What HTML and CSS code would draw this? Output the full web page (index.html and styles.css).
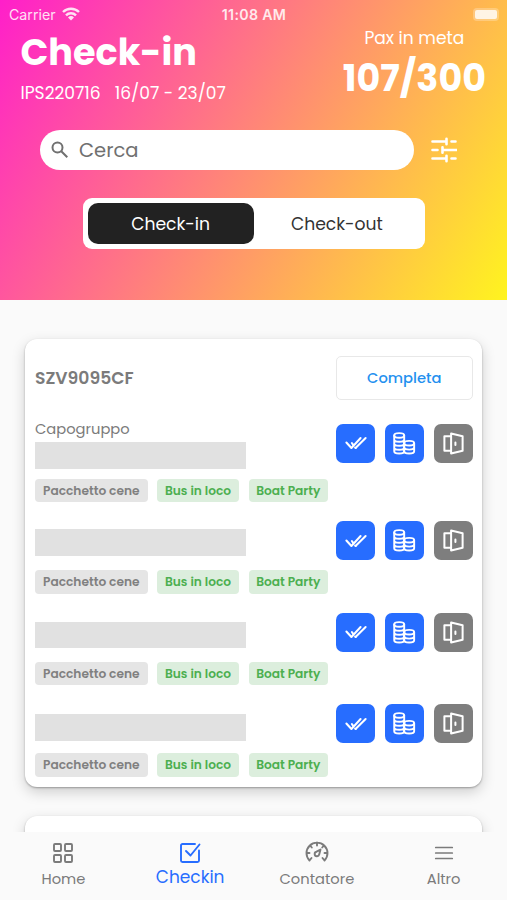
FILE: index.html
```html
<!DOCTYPE html>
<html lang="it">
<head>
    <meta charset="UTF-8">
    <meta name="viewport" content="width=device-width, initial-scale=1.0">
    <title>Check-in</title>
    <link rel="stylesheet" href="styles.css">
</head>
<body>

    <!-- Icone condivise -->
    <svg class="sprite" width="0" height="0">
        <symbol id="icon-checks" viewBox="0 0 24 24">
            <path d="M1.500 11.500l5.500 6L17 6.500M11.500 17.500L22.500 6.500M7.500 12l1 1.500M11 17l1 .5"/>
        </symbol>
        <symbol id="icon-coins" viewBox="0 0 24 24">
            <ellipse cx="7" cy="3.600" rx="5.200" ry="2.400"/>
            <path d="M1.800 3.600v16.500c0 1.300 2.300 2.400 5.200 2.400s5.200-1.100 5.200-2.400v-16.500M1.800 7.800c0 1.300 2.300 2.400 5.200 2.400s5.200-1.100 5.200-2.400M1.800 12c0 1.300 2.300 2.400 5.200 2.400s5.200-1.100 5.200-2.400M1.800 16.200c0 1.300 2.300 2.400 5.200 2.400s5.200-1.100 5.200-2.400"/>
            <ellipse cx="17.400" cy="11.700" rx="5.200" ry="2.400"/>
            <path d="M22.600 11.700v8.400c0 1.300-2.300 2.400-5.200 2.400s-5.200-1.100-5.200-2.400v-8.400M12.200 16c0 1.300 2.300 2.400 5.200 2.400s5.200-1.100 5.200-2.400"/>
        </symbol>
        <symbol id="icon-door" viewBox="0 0 24 24">
            <path d="M9.500 1.500L21.500 4.500v15L9.500 22.500zM9.500 4.500h-7v15h7M14 11v2.500"/>
        </symbol>
    </svg>

    <!-- Intestazione -->
    <header class="header">
        <div class="status-bar">
            <div class="carrier">
                <span>Carrier</span>
                <svg class="wifi" viewBox="0 0 18 14">
                    <path d="M1 5a11.500 11.500 0 0 1 16 0M4 8.300a7 7 0 0 1 10 0"/>
                    <path class="wifi-dot" d="M9 13.500L6 10.400a4.300 4.300 0 0 1 6 0z"/>
                </svg>
            </div>
            <span class="time">11:08 AM</span>
            <div class="battery"><span class="battery-level"></span></div>
        </div>

        <div class="heading">
            <div>
                <h1>Check-in</h1>
                <p class="trip"><span class="trip-code">IPS220716</span><span class="trip-dates">16/07 - 23/07</span></p>
            </div>
            <div class="pax">
                <p class="pax-label">Pax in meta</p>
                <p class="pax-count">107/300</p>
            </div>
        </div>

        <div class="search-row">
            <div class="search">
                <svg class="search-icon" viewBox="0 0 18 18">
                    <circle cx="6.500" cy="6.500" r="5"/>
                    <path d="M10.300 10.300l6 6"/>
                </svg>
                <span>Cerca</span>
            </div>
            <svg class="filter-icon" viewBox="0 0 26 26">
                <path d="M1.500 4.500h14M20.500 4.500h4M15.500 1.800v5.400M1.500 13h5M11.500 13h14M11.500 10.300v5.400M1.500 21.500h14M20.500 21.500h4M15.500 18.800v5.400"/>
            </svg>
        </div>

        <div class="switch">
            <button class="switch-option active">Check-in</button>
            <button class="switch-option">Check-out</button>
        </div>
    </header>

    <!-- Elenco gruppi -->
    <main class="content">
        <section class="card">
            <div class="card-header">
                <h2>SZV9095CF</h2>
                <button class="complete">Completa</button>
            </div>

            <div class="person leader">
                <div class="info">
                    <p class="role">Capogruppo</p>
                    <div class="name"></div>
                </div>
                <div class="actions">
                    <button class="action"><svg class="checks"><use href="#icon-checks"/></svg></button>
                    <button class="action"><svg class="coins"><use href="#icon-coins"/></svg></button>
                    <button class="action off"><svg class="door"><use href="#icon-door"/></svg></button>
                </div>
                <div class="tags">
                    <span class="tag tag-dinner">Pacchetto cene</span>
                    <span class="tag tag-bus">Bus in loco</span>
                    <span class="tag tag-boat">Boat Party</span>
                </div>
            </div>

            <div class="person">
                <div class="info"><div class="name"></div></div>
                <div class="actions">
                    <button class="action"><svg class="checks"><use href="#icon-checks"/></svg></button>
                    <button class="action"><svg class="coins"><use href="#icon-coins"/></svg></button>
                    <button class="action off"><svg class="door"><use href="#icon-door"/></svg></button>
                </div>
                <div class="tags">
                    <span class="tag tag-dinner">Pacchetto cene</span>
                    <span class="tag tag-bus">Bus in loco</span>
                    <span class="tag tag-boat">Boat Party</span>
                </div>
            </div>

            <div class="person">
                <div class="info info-low"><div class="name"></div></div>
                <div class="actions">
                    <button class="action"><svg class="checks"><use href="#icon-checks"/></svg></button>
                    <button class="action"><svg class="coins"><use href="#icon-coins"/></svg></button>
                    <button class="action off"><svg class="door"><use href="#icon-door"/></svg></button>
                </div>
                <div class="tags">
                    <span class="tag tag-dinner">Pacchetto cene</span>
                    <span class="tag tag-bus">Bus in loco</span>
                    <span class="tag tag-boat">Boat Party</span>
                </div>
            </div>

            <div class="person">
                <div class="info info-lower"><div class="name"></div></div>
                <div class="actions">
                    <button class="action"><svg class="checks"><use href="#icon-checks"/></svg></button>
                    <button class="action"><svg class="coins"><use href="#icon-coins"/></svg></button>
                    <button class="action off"><svg class="door"><use href="#icon-door"/></svg></button>
                </div>
                <div class="tags">
                    <span class="tag tag-dinner">Pacchetto cene</span>
                    <span class="tag tag-bus">Bus in loco</span>
                    <span class="tag tag-boat">Boat Party</span>
                </div>
            </div>
        </section>

        <section class="card card-next"></section>
    </main>

    <!-- Navigazione -->
    <nav class="tab-bar">
        <a class="tab">
            <svg viewBox="0 0 24 24">
                <rect x="3" y="3" width="7" height="7" rx="1"/>
                <rect x="14" y="3" width="7" height="7" rx="1"/>
                <rect x="3" y="14" width="7" height="7" rx="1"/>
                <rect x="14" y="14" width="7" height="7" rx="1"/>
            </svg>
            <span>Home</span>
        </a>
        <a class="tab selected">
            <svg viewBox="0 0 24 24">
                <path d="M17 3H4.500A1.500 1.500 0 0 0 3 4.500v15A1.500 1.500 0 0 0 4.500 21h15a1.500 1.500 0 0 0 1.500-1.500V9.500M8 10l4.500 4.500L21.500 3.500"/>
            </svg>
            <span>Checkin</span>
        </a>
        <a class="tab">
            <svg viewBox="0 0 24 24">
                <path d="M4.500 19.500a10.500 10.500 0 1 1 15 0l-2-2.500M4.500 19.500l2-2.500M12 1.500v3M5.500 5l1.300 1.500M18.500 5l-1.300 1.500M1.500 12H4.500M19.500 12h3"/>
                <path d="M15.500 8.500l-1.300 5a2.300 2.300 0 1 1-2.700-2.800z"/>
            </svg>
            <span>Contatore</span>
        </a>
        <a class="tab">
            <svg class="menu" viewBox="0 0 24 24"><path d="M3 6h18M3 12h18M3 18h18"/></svg>
            <span>Altro</span>
        </a>
    </nav>

</body>
</html>
```
FILE: styles.css
```css
* {
    box-sizing: border-box;
}

body {
    font-family: Poppins, Inter, "Open Sans", sans-serif;
    margin: 0;
    height: 900px;
    display: flex;
    flex-direction: column;
    overflow: hidden;
    background-color: #fafafa;
    color: #7b7b7b;
}

h1, h2, p {
    margin: 0;
}

button {
    font: inherit;
    border: none;
    padding: 0;
    cursor: pointer;
}

svg {
    fill: none;
    stroke: currentColor;
    stroke-linecap: round;
    stroke-linejoin: round;
}

.sprite {
    position: absolute;
}

/* Intestazione */
.header {
    height: 300px;
    flex-shrink: 0;
    color: white;
    background: linear-gradient(120.6deg, #ff1fca, #fff41f);
}

.status-bar {
    height: 28px;
    padding: 0 8px 0 9px;
    display: grid;
    grid-template-columns: 1fr auto 1fr;
    align-items: center;
    font-family: Inter, sans-serif;
    font-size: 14.2px;
    opacity: 0.85;
}

.carrier {
    display: flex;
    align-items: center;
    gap: 6px;
}

.wifi {
    width: 18px;
    height: 14px;
    stroke-width: 2.4;
    stroke-linecap: butt;
}

.wifi-dot {
    fill: currentColor;
    stroke: none;
}

.time {
    font-weight: 600;
    letter-spacing: 0.3px;
}

.battery {
    justify-self: end;
    width: 26px;
    height: 13px;
    padding: 2px;
    border-radius: 4px;
    background-color: rgba(255, 255, 255, 0.3);
}

.battery-level {
    display: block;
    height: 9px;
    border-radius: 2px;
    background-color: white;
}

.heading {
    height: 102px;
    padding: 0 21px 0 20.5px;
    display: flex;
    justify-content: space-between;
}

h1 {
    margin-top: 3px;
    font-size: 36.6px;
    line-height: 44px;
    font-weight: 700;
}

.trip {
    margin-top: 6px;
    font-size: 17.1px;
    line-height: 24px;
    display: flex;
    gap: 14px;
}

.pax {
    text-align: center;
}

.pax-label {
    font-size: 17.1px;
    line-height: 20px;
}

.pax-count {
    margin-top: 9px;
    font-size: 36.5px;
    line-height: 44px;
    font-weight: 700;
}

.search-row {
    padding: 0 50px 0 40px;
    display: flex;
    align-items: center;
    justify-content: space-between;
}

.search {
    width: 374px;
    height: 40px;
    padding-left: 11px;
    display: flex;
    align-items: center;
    gap: 10px;
    border-radius: 20px;
    background-color: white;
    color: #707070;
    font-size: 19.5px;
}

.search-icon {
    width: 18px;
    height: 18px;
    stroke-width: 2;
    stroke-linecap: butt;
}

.filter-icon {
    width: 26px;
    height: 26px;
    stroke-width: 2.6;
}

.switch {
    width: 342.5px;
    height: 51px;
    margin: 28px 0 0 82.5px;
    padding: 5px;
    display: flex;
    border-radius: 9px;
    background-color: white;
}

.switch-option {
    flex: 1;
    border-radius: 10px;
    background: none;
    color: #333;
    font-size: 17.2px;
}

.switch-option.active {
    background-color: #222;
    color: white;
}

/* Elenco gruppi */
.content {
    flex: 1;
    min-height: 0;
    padding: 39px 25px 0;
    overflow: hidden;
}

.card {
    height: 447.5px;
    padding: 17px 9px 0 10px;
    border-radius: 12px;
    background-color: white;
    box-shadow: 0 1px 2px rgba(0, 0, 0, 0.3), 0 5px 14px rgba(0, 0, 0, 0.18);
}

.card-next {
    margin-top: 29.5px;
}

.card-header {
    height: 44px;
    display: flex;
    align-items: center;
    justify-content: space-between;
}

h2 {
    font-size: 17.2px;
    font-weight: 600;
}

.complete {
    width: 137.5px;
    height: 44px;
    border: 1.5px solid #e8e8e8;
    border-radius: 5px;
    background-color: white;
    color: #2390ef;
    font-size: 14.7px;
    font-weight: 500;
}

.person {
    height: 73px;
    margin-top: 18.6px;
    display: grid;
    grid-template-columns: 1fr auto;
    grid-template-rows: 49px 24px;
}

.leader {
    height: 84px;
    margin-top: 18.5px;
    grid-template-rows: 60px 24px;
}

.info {
    padding-top: 8px;
}

.info-low {
    padding-top: 9px;
}

.info-lower {
    padding-top: 10px;
}

.leader .info {
    padding-top: 0;
}

.role {
    font-size: 14.7px;
    line-height: 20px;
    margin-bottom: 3.5px;
}

.name {
    width: 211px;
    height: 26.5px;
    background-color: #e1e1e1;
}

.actions {
    display: flex;
    gap: 10px;
    align-self: start;
}

.leader .actions {
    margin-top: 5px;
}

.action {
    width: 39px;
    height: 39px;
    display: flex;
    align-items: center;
    justify-content: center;
    border-radius: 7px;
    background-color: #276dff;
    color: white;
}

.action.off {
    background-color: #7e7e7e;
}

.checks {
    width: 24px;
    height: 22px;
    stroke-width: 2.2;
}

.coins {
    width: 24px;
    height: 23px;
    margin-left: -1px;
    stroke-width: 2;
}

.door {
    width: 23px;
    height: 23px;
    margin-left: -1px;
    stroke-width: 2.1;
}

.tags {
    grid-column: 1 / 3;
    display: flex;
    gap: 9.5px;
}

.tag {
    height: 23.5px;
    border-radius: 4px;
    background-color: #dceedd;
    color: #4caf50;
    font-size: 12.2px;
    line-height: 24px;
    font-weight: 600;
    text-align: center;
    white-space: nowrap;
}

.tag-dinner {
    width: 112.5px;
    background-color: #e5e5e5;
    color: #808080;
}

.tag-bus {
    width: 82px;
}

.tag-boat {
    width: 79.5px;
}

/* Navigazione */
.tab-bar {
    height: 68px;
    flex-shrink: 0;
    display: grid;
    grid-template-columns: repeat(4, 1fr);
    background-color: #fafafa;
}

.tab {
    padding-top: 9px;
    display: flex;
    flex-direction: column;
    align-items: center;
    font-size: 14.7px;
    line-height: 24px;
}

.tab svg {
    width: 24px;
    height: 24px;
    margin-bottom: 2px;
    stroke-width: 1.9;
}

.tab .menu {
    width: 22px;
}

.tab.selected {
    color: #276dff;
    font-size: 17px;
}

.tab.selected svg {
    margin-bottom: 0;
}
```
